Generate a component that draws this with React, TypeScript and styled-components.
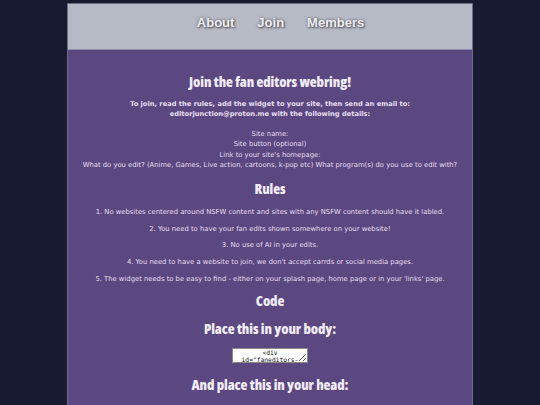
import styled, { createGlobalStyle } from "styled-components";

const GlobalStyle = createGlobalStyle`
  html, body {
    margin: 0;
    padding: 0;
    background-color: #171a31;
  }
  body {
    font-family: "DejaVu Sans", Verdana, sans-serif;
  }
`;

const navLinks = ["About", "Join", "Members"];

const details = [
  "Site name:",
  "Site button (optional)",
  "Link to your site's homepage:",
  "What do you edit? (Anime, Games, Live action, cartoons, k-pop etc) What program(s) do you use to edit with?",
];

const rules = [
  "1. No websites centered around NSFW content and sites with any NSFW content should have it labled.",
  "2. You need to have your fan edits shown somewhere on your website!",
  "3. No use of AI in your edits.",
  "4. You need to have a website to join, we don't accept carrds or social media pages.",
  "5. The widget needs to be easy to find - either on your splash page, home page or in your 'links' page.",
];

const App = () => {
  return (
    <>
      <GlobalStyle />
      <Wrapper>
        <Header>
          <Nav>
            {navLinks.map((link) => (
              <NavLink key={link} href="#">
                {link}
              </NavLink>
            ))}
          </Nav>
        </Header>
        <Main>
          <Title>Join the fan editors webring!</Title>
          <Intro>
            To join, read the rules, add the widget to your site, then send an
            email to:
            <br />
            editorjunction@proton.me with the following details:
          </Intro>
          <Details>
            {details.map((line) => (
              <div key={line}>{line}</div>
            ))}
          </Details>
          <Heading>Rules</Heading>
          <RuleList>
            {rules.map((rule) => (
              <Rule key={rule}>{rule}</Rule>
            ))}
          </RuleList>
          <Heading>Code</Heading>
          <Heading>Place this in your body:</Heading>
          <CodeBox
            readOnly
            defaultValue={'<div id="faneditors-webring"></div>'}
          />
          <Heading>And place this in your head:</Heading>
        </Main>
      </Wrapper>
    </>
  );
};

export default App;

const Wrapper = styled.div`
  width: 404px;
  margin: 3px auto 0;
  border: 1px solid #6f6d86;
  background-color: #5c4880;
  min-height: 420px;
`;

const Header = styled.header`
  height: 45px;
  background-color: #b6bac4;
  border-bottom: 1px solid #8e8aa6;
  display: flex;
  align-items: center;
  justify-content: center;
`;

const Nav = styled.nav`
  display: flex;
  gap: 23px;
  padding: 0 0 8px 21px;
`;

const NavLink = styled.a`
  font-family: "Liberation Sans", Arial, sans-serif;
  font-weight: 700;
  font-size: 13px;
  color: #eeeef2;
  text-decoration: none;
  text-shadow: 0 0 3px #5a5a66, 1px 1px 2px #55555f;
`;

const Main = styled.main`
  display: flex;
  flex-direction: column;
  align-items: center;
  text-align: center;
  padding: 23px 8px 0;
  color: #e6def0;
`;

const Heading = styled.h2`
  margin: 0 0 11px;
  font-family: "Open Sans", "DejaVu Sans", sans-serif;
  font-stretch: 75%;
  font-weight: 800;
  font-size: 14.2px;
  line-height: 17px;
  color: #f1ecf7;
  letter-spacing: -0.1px;
`;

const Title = styled(Heading)`
  margin-bottom: 6px;
`;

const Intro = styled.p`
  margin: 3px 0 0;
  font-size: 6.7px;
  font-weight: 700;
  line-height: 10px;
`;

const Details = styled.div`
  margin: 10px 0 10px;
  font-size: 6.8px;
  line-height: 10.3px;
`;

const RuleList = styled.div`
  display: flex;
  flex-direction: column;
  gap: 8px;
  margin: 0 0 9px;
`;

const Rule = styled.p`
  margin: 0;
  font-size: 6.8px;
  line-height: 8.6px;
`;

const CodeBox = styled.textarea`
  width: 76px;
  height: 15px;
  margin: 0 0 13px;
  padding: 1px 2px;
  box-sizing: border-box;
  border: 1px solid #8a8a8a;
  background-color: #ffffff;
  color: #111;
  font-family: "DejaVu Sans Mono", monospace;
  font-size: 6.3px;
  line-height: 6.4px;
  text-align: center;
  resize: both;
  overflow: hidden;
`;
